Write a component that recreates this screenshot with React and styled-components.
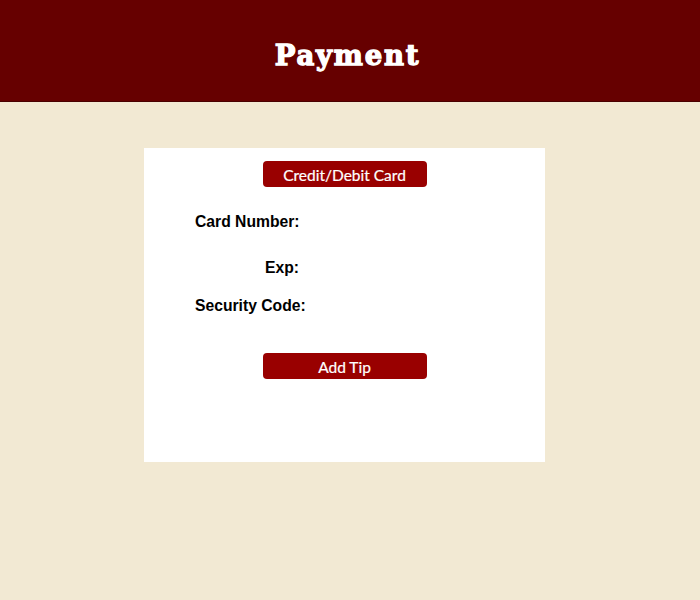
import styled, { createGlobalStyle } from "styled-components";

const GlobalStyle = createGlobalStyle`
  html, body {
    margin: 0;
    padding: 0;
    background: #f2e9d3;
  }
`;

const Page = styled.div`
  width: 700px;
  min-height: 600px;
  background: #f2e9d3;
`;

const Header = styled.header`
  height: 101px;
  background: #660000;
  border-bottom: 1px solid #4a0000;
  display: flex;
  align-items: center;
  justify-content: center;
`;

const Title = styled.h1`
  margin: 0 0 0 -5px;
  padding-top: 8px;
  color: #fff;
  font-family: "DejaVu Serif", serif;
  font-weight: 900;
  font-size: 27.5px;
  letter-spacing: 1.8px;
  -webkit-text-stroke: 1.3px #fff;
`;

const Main = styled.main`
  display: flex;
  padding: 46px 0 0 144px;
`;

const Card = styled.section`
  width: 401px;
  height: 314px;
  box-sizing: border-box;
  background: #fff;
  padding-top: 13px;
  display: flex;
  flex-direction: column;
`;

const RedButton = styled.button`
  align-self: center;
  width: 164px;
  height: 26px;
  margin-top: ${p => p.$top || 0}px;
  border: none;
  border-radius: 4px;
  background: #990000;
  color: #fff;
  font-family: Lato, "Open Sans", sans-serif;
  font-size: 15.5px;
  padding: 1px 0 0;
  -webkit-text-stroke: 0.2px #fff;
  cursor: pointer;
`;

const Fields = styled.div`
  display: flex;
  flex-direction: column;
  padding-left: 51px;
`;

const Label = styled.div`
  width: 104px;
  height: 18px;
  line-height: 18px;
  margin-top: ${p => p.$top}px;
  text-align: right;
  white-space: nowrap;
  font-family: "Liberation Sans", Arial, sans-serif;
  font-weight: bold;
  font-size: 15.7px;
  color: #000;
`;

export default function App() {
  return (
    <Page>
      <GlobalStyle />
      <Header>
        <Title>Payment</Title>
      </Header>
      <Main>
        <Card>
          <RedButton>Credit/Debit Card</RedButton>
          <Fields>
            <Label $top={26}>Card Number:</Label>
            <Label $top={28}>Exp:</Label>
            <Label $top={20}>Security Code:</Label>
          </Fields>
          <RedButton $top={38}>Add Tip</RedButton>
        </Card>
      </Main>
    </Page>
  );
}
